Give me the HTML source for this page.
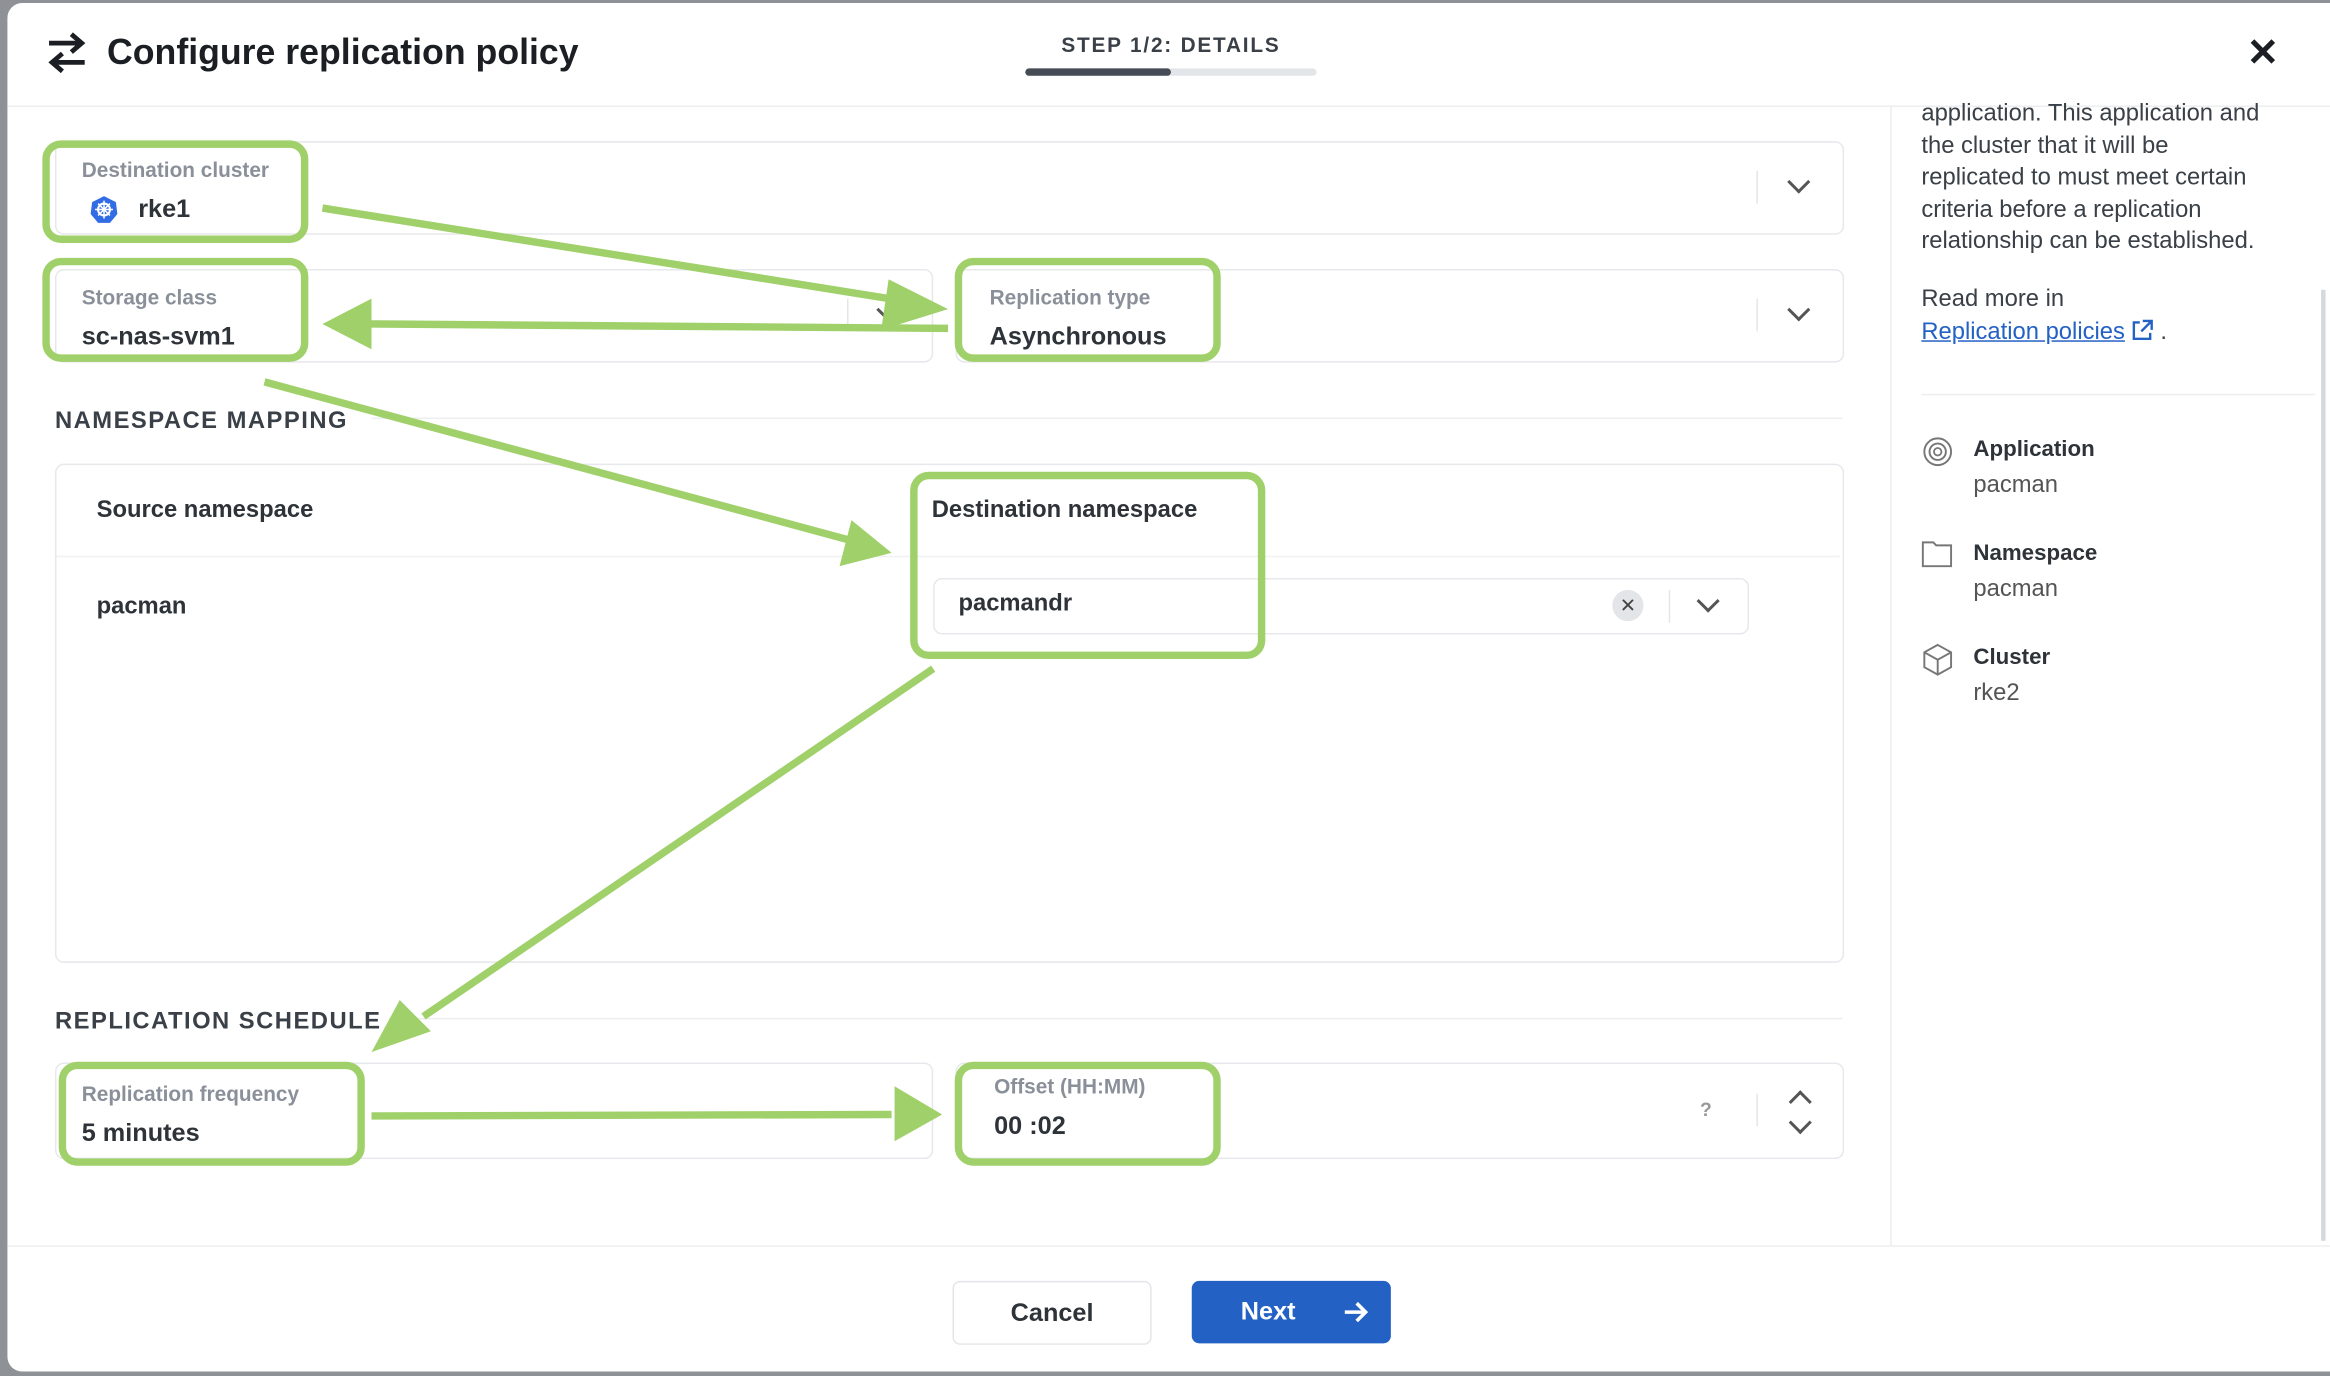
<!DOCTYPE html>
<html><head><meta charset="utf-8"><style>
html,body{margin:0;padding:0;width:2330px;height:1376px;overflow:hidden;background:#8e9297}
#s{position:absolute;left:0;top:0;width:1568px;height:926px;transform:scale(1.48597);transform-origin:0 0;font-family:"Liberation Sans",sans-serif;color:#2d3338}
.card{position:absolute;left:5px;top:2px;width:1563px;height:921px;background:#fff;border-radius:10px 0 0 10px}
.a{position:absolute}
.box{position:absolute;border:1px solid #e6e8ec;border-radius:6px;background:#fff}
.lbl{position:absolute;font-size:14px;color:#8a9099;font-weight:bold}
.val{position:absolute;font-size:17px;color:#2d3338;font-weight:bold}
.chev{position:absolute;width:9px;height:9px;border-right:2px solid #555;border-bottom:2px solid #555;transform:rotate(45deg)}
.sep{position:absolute;width:1px;height:22px;background:#e3e5e8}
.h{position:absolute;font-size:16px;font-weight:bold;letter-spacing:1px;color:#3a4047}
.rp{position:absolute;left:1293px;font-size:16px;color:#3a4047;line-height:21.5px}
</style></head><body><div id="s">
<div class="card"></div>
<!-- header -->
<svg class="a" style="left:30px;top:20px" width="30" height="32" viewBox="0 0 30 32"><path d="M3 9h22M18 3l7 6-7 6M27 22H5M12 16l-7 6 7 6" fill="none" stroke="#1b1f24" stroke-width="3.2"/></svg>
<div class="a" style="left:72px;top:22px;font-size:24px;font-weight:bold;color:#1b1f24">Configure replication policy</div>
<div class="a" style="left:690px;width:196px;top:22px;text-align:center;font-size:14px;font-weight:bold;letter-spacing:1.2px;color:#3a4047">STEP 1/2: DETAILS</div>
<div class="a" style="left:690px;top:46px;width:196px;height:5px;background:#e3e5e8;border-radius:3px"></div>
<div class="a" style="left:690px;top:46px;width:98px;height:5px;background:#454c55;border-radius:3px"></div>
<div class="a" style="left:1512px;top:20px;font-size:26px;font-weight:bold;color:#1b1f24">✕</div>
<div class="a" style="left:5px;top:71px;width:1563px;height:1px;background:#eceef0"></div>
<div class="a" style="left:1272px;top:72px;width:1px;height:766px;background:#eceef0"></div>
<div class="a" style="left:1562px;top:195px;width:3px;height:640px;background:#d5d8dc"></div>
<!-- fields -->
<div class="box" style="left:37px;top:95px;width:1202px;height:61px"></div>
<div class="lbl" style="left:55px;top:106px">Destination cluster</div>
<svg class="a" style="left:60px;top:131px" width="20" height="20" viewBox="0 0 20 20"><polygon points="10,1 18,5 19,13 14,19 6,19 1,13 2,5" fill="#326ce5"/><circle cx="10" cy="10" r="4" fill="none" stroke="#fff" stroke-width="1.4"/><path d="M10 4v12M4 10h12M6 6l8 8M14 6l-8 8" stroke="#fff" stroke-width="1"/></svg>
<div class="val" style="left:93px;top:131px">rke1</div>
<div class="sep" style="left:1182px;top:115px"></div><div class="chev" style="left:1205px;top:117px"></div>

<div class="box" style="left:37px;top:181px;width:589px;height:61px"></div>
<div class="lbl" style="left:55px;top:192px">Storage class</div>
<div class="val" style="left:55px;top:217px">sc-nas-svm1</div>
<div class="sep" style="left:570px;top:201px"></div><div class="chev" style="left:592px;top:203px"></div>
<div class="box" style="left:643px;top:181px;width:596px;height:61px"></div>
<div class="lbl" style="left:666px;top:192px">Replication type</div>
<div class="val" style="left:666px;top:217px">Asynchronous</div>
<div class="sep" style="left:1182px;top:201px"></div><div class="chev" style="left:1205px;top:203px"></div>

<div class="h" style="left:37px;top:275px">NAMESPACE MAPPING</div>
<div class="a" style="left:250px;top:281px;width:990px;height:1px;background:#eceef0"></div>
<div class="box" style="left:37px;top:312px;width:1202px;height:334px"></div>
<div class="a" style="left:38px;top:374px;width:1200px;height:1px;background:#f0f1f3"></div>
<div class="a" style="left:65px;top:335px;font-size:16px;font-weight:bold">Source namespace</div>
<div class="a" style="left:627px;top:335px;font-size:16px;font-weight:bold">Destination namespace</div>
<div class="a" style="left:65px;top:400px;font-size:16px;font-weight:bold">pacman</div>
<div class="box" style="left:628px;top:389px;width:547px;height:36px"></div>
<div class="a" style="left:645px;top:398px;font-size:16px;font-weight:bold">pacmandr</div>
<div class="a" style="left:1085px;top:397px;width:21px;height:21px;border-radius:50%;background:#e3e5e8;text-align:center;font-size:13px;line-height:21px;color:#444">✕</div>
<div class="sep" style="left:1123px;top:397px"></div><div class="chev" style="left:1144px;top:399px"></div>

<div class="h" style="left:37px;top:679px">REPLICATION SCHEDULE</div>
<div class="a" style="left:262px;top:685px;width:978px;height:1px;background:#eceef0"></div>
<div class="box" style="left:37px;top:715px;width:589px;height:63px"></div>
<div class="lbl" style="left:55px;top:728px">Replication frequency</div>
<div class="val" style="left:55px;top:753px">5 minutes</div>
<div class="box" style="left:643px;top:715px;width:596px;height:63px"></div>
<div class="lbl" style="left:669px;top:723px">Offset (HH:MM)</div>
<div class="val" style="left:669px;top:748px">00 :02</div>
<div class="a" style="left:1144px;top:739px;font-size:13px;color:#999;font-weight:bold">?</div>
<div class="sep" style="left:1182px;top:736px"></div>
<div class="chev" style="left:1206px;top:736px;transform:rotate(225deg)"></div><div class="chev" style="left:1206px;top:750px"></div>

<!-- footer -->
<div class="a" style="left:5px;top:838px;width:1563px;height:1px;background:#eceef0"></div>
<div class="a" style="left:641px;top:862px;width:132px;height:41px;border:1px solid #e3e5e8;border-radius:5px;text-align:center;line-height:41px;font-size:17px;font-weight:bold">Cancel</div>
<div class="a" style="left:802px;top:862px;width:134px;height:42px;background:#2361c4;border-radius:5px;color:#fff;font-size:17px;font-weight:bold;line-height:42px"><span style="position:absolute;left:33px">Next</span>
<svg style="position:absolute;left:102px;top:13px" width="18" height="16" viewBox="0 0 18 16"><path d="M1 8h14M9 2l6 6-6 6" fill="none" stroke="#fff" stroke-width="2.4"/></svg></div>

<!-- right panel -->
<div class="rp" style="top:66px">application. This application and<br>the cluster that it will be<br>replicated to must meet certain<br>criteria before a replication<br>relationship can be established.</div>
<div class="rp" style="top:191px">Read more in<br><span style="color:#2361c4;text-decoration:underline">Replication policies</span> <svg width="15" height="15" viewBox="0 0 15 15" style="vertical-align:-2px"><path d="M6 2H2v11h11V9M8 1h6v6M14 1L7 8" fill="none" stroke="#2361c4" stroke-width="1.6"/></svg> .</div>
<div class="a" style="left:1293px;top:265px;width:265px;height:1px;background:#eceef0"></div>
<svg class="a" style="left:1293px;top:293px" width="22" height="22"><circle cx="11" cy="11" r="9" fill="none" stroke="#777" stroke-width="1.3"/><circle cx="11" cy="11" r="5.5" fill="none" stroke="#777" stroke-width="1.3"/><circle cx="11" cy="11" r="2.5" fill="none" stroke="#777" stroke-width="1.2"/></svg>
<div class="a" style="left:1328px;top:294px;font-size:15px;font-weight:bold">Application</div>
<div class="a" style="left:1328px;top:318px;font-size:16px;color:#555">pacman</div>
<svg class="a" style="left:1293px;top:363px" width="22" height="20"><path d="M1 2h7l2 2h10v14H1z" fill="none" stroke="#777" stroke-width="1.3"/></svg>
<div class="a" style="left:1328px;top:364px;font-size:15px;font-weight:bold">Namespace</div>
<div class="a" style="left:1328px;top:388px;font-size:16px;color:#555">pacman</div>
<svg class="a" style="left:1293px;top:433px" width="22" height="22"><path d="M11 1l9 5v10l-9 5-9-5V6zM2 6l9 5 9-5M11 11v10" fill="none" stroke="#777" stroke-width="1.3"/></svg>
<div class="a" style="left:1328px;top:434px;font-size:15px;font-weight:bold">Cluster</div>
<div class="a" style="left:1328px;top:458px;font-size:16px;color:#555">rke2</div>

<!-- annotations -->
<svg class="a" style="left:0;top:0" width="1568" height="926">
<g fill="none" stroke="#a0d06a" stroke-width="5">
<rect x="31" y="97" width="174" height="64" rx="10"/>
<rect x="31" y="176" width="174" height="65" rx="10"/>
<rect x="645" y="176" width="174" height="65" rx="10"/>
<rect x="615" y="320" width="234" height="121" rx="10"/>
<rect x="42" y="717" width="201" height="65" rx="10"/>
<rect x="645" y="717" width="174" height="65" rx="10"/>
<path d="M217 140L605 202M638 221L250 218M178 257L570 363M628 450L285 684M250 751L600 750"/>
</g>
<g fill="#a0d06a">
<polygon points="638,208 598,188 593,222"/>
<polygon points="217,218 250,201 250,235"/>
<polygon points="600,372 573,350 565,381"/>
<polygon points="250,708 269,673 290,694"/>
<polygon points="634,750 602,731 602,768"/>
</g>
</svg>
</div></body></html>
